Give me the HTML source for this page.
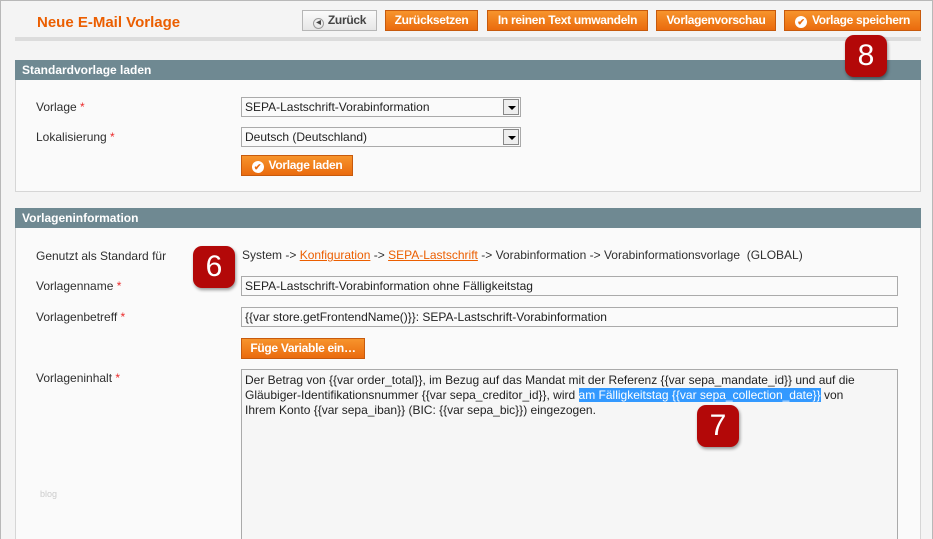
<!DOCTYPE html><html><head><style>
*{margin:0;padding:0;box-sizing:border-box}
html,body{width:933px;height:539px;overflow:hidden}
body{background:#f4f4f4;font-family:"Liberation Sans",sans-serif;font-size:12px;color:#2f2f2f;position:relative}
.a{position:absolute}
.frame{left:0;top:0;width:933px;height:539px;border:1px solid #b8b8b8;border-bottom:none}
.btn{position:absolute;height:21px;background:linear-gradient(#f7942c,#ea6b0e);border:1px solid #c75a0d;color:#fff;font-weight:bold;font-size:12px;line-height:19px;text-align:center;letter-spacing:-0.3px}
.gray{background:linear-gradient(#fbfbfb,#e6e6e6);border:1px solid #b6b6b6;color:#444}
.hdr{position:absolute;left:15px;width:906px;height:20px;background:#6f8992;color:#fff;font-weight:bold;font-size:12px;line-height:20px;padding-left:7px}
.box{position:absolute;left:15px;width:906px;background:#fafafa;border:1px solid #d6d6d6;border-top:none}
.lbl{position:absolute;left:36px;font-size:12px}
.lbl b{color:#eb2a2a;font-weight:normal}
.inp{position:absolute;left:241px;height:20px;border:1px solid #aaa;background:#fafafa;padding-left:3px;line-height:18px;font-size:12px;color:#222}
.sel .ar{position:absolute;right:1px;top:1px;width:16px;height:16px;border:1px solid #888;background:#eee}
.sel .ar:after{content:"";position:absolute;left:4px;top:6px;border:4px solid transparent;border-top:4px solid #000}
.badge{position:absolute;width:42px;height:42px;border-radius:9px;background:#b30808;color:#fff;font-size:30px;text-align:center;line-height:42px;box-shadow:1px 2px 3px rgba(0,0,0,.4)}
.chk{display:inline-block;width:12px;height:12px;border-radius:50%;background:#fff;color:#ea6b0e;font-size:9px;line-height:12px;vertical-align:-1px;margin-right:5px}
a{color:#eb5e00}
</style></head><body>
<div class="a frame"></div>
<div class="a" style="left:37px;top:14px;color:#eb5e00;font-weight:bold;font-size:15px">Neue E-Mail Vorlage</div>
<div class="btn gray" style="left:302px;top:10px;width:75px"><span style="display:inline-block;width:11px;height:11px;border:1px solid #999;border-radius:50%;font-size:6px;line-height:9px;vertical-align:0;margin-right:4px">◀</span>Zurück</div>
<div class="btn" style="left:385px;top:10px;width:93px">Zurücksetzen</div>
<div class="btn" style="left:487px;top:10px;width:161px">In reinen Text umwandeln</div>
<div class="btn" style="left:656px;top:10px;width:120px">Vorlagenvorschau</div>
<div class="btn" style="left:784px;top:10px;width:137px"><span class="chk">✔</span>Vorlage speichern</div>
<div class="a" style="left:15px;top:37px;width:906px;height:4px;background:#dcdcdc"></div>

<div class="hdr" style="top:60px">Standardvorlage laden</div>
<div class="box" style="top:80px;height:112px"></div>
<div class="lbl" style="top:100px">Vorlage <b>*</b></div>
<div class="inp sel" style="top:97px;width:280px">SEPA-Lastschrift-Vorabinformation<span class="ar"></span></div>
<div class="lbl" style="top:130px">Lokalisierung <b>*</b></div>
<div class="inp sel" style="top:127px;width:280px">Deutsch (Deutschland)<span class="ar"></span></div>
<div class="btn" style="left:241px;top:155px;width:112px"><span class="chk">✔</span>Vorlage laden</div>

<div class="hdr" style="top:208px">Vorlageninformation</div>
<div class="box" style="top:228px;height:320px"></div>
<div class="lbl" style="top:249px">Genutzt als Standard für</div>
<div class="a" style="left:242px;top:248px">System -&gt; <a href="#">Konfiguration</a> -&gt; <a href="#">SEPA-Lastschrift</a> -&gt; Vorabinformation -&gt; Vorabinformationsvorlage &nbsp;(GLOBAL)</div>
<div class="lbl" style="top:279px">Vorlagenname <b>*</b></div>
<div class="inp" style="top:276px;width:657px">SEPA-Lastschrift-Vorabinformation ohne Fälligkeitstag</div>
<div class="lbl" style="top:310px">Vorlagenbetreff <b>*</b></div>
<div class="inp" style="top:307px;width:657px">{{var store.getFrontendName()}}: SEPA-Lastschrift-Vorabinformation</div>
<div class="btn" style="left:241px;top:338px;width:124px">Füge Variable ein…</div>
<div class="lbl" style="top:371px">Vorlageninhalt <b>*</b></div>
<div class="a" style="left:241px;top:369px;width:657px;height:180px;border:1px solid #aaa;background:#f6f6f6;padding:3px 3px;line-height:15px;font-size:12px;white-space:nowrap;color:#222">Der Betrag von {{var order_total}}, im Bezug auf das Mandat mit der Referenz {{var sepa_mandate_id}} und auf die<br>Gläubiger-Identifikationsnummer {{var sepa_creditor_id}}, wird <span style="background:#3399ff;color:#fff">am Fälligkeitstag {{var sepa_collection_date}}</span> von<br>Ihrem Konto {{var sepa_iban}} (BIC: {{var sepa_bic}}) eingezogen.</div>
<div class="a" style="left:40px;top:489px;font-size:9px;color:#ccc">blog</div>

<div class="badge" style="left:845px;top:35px">8</div>
<div class="badge" style="left:193px;top:246px">6</div>
<div class="badge" style="left:697px;top:405px">7</div>
</body></html>
